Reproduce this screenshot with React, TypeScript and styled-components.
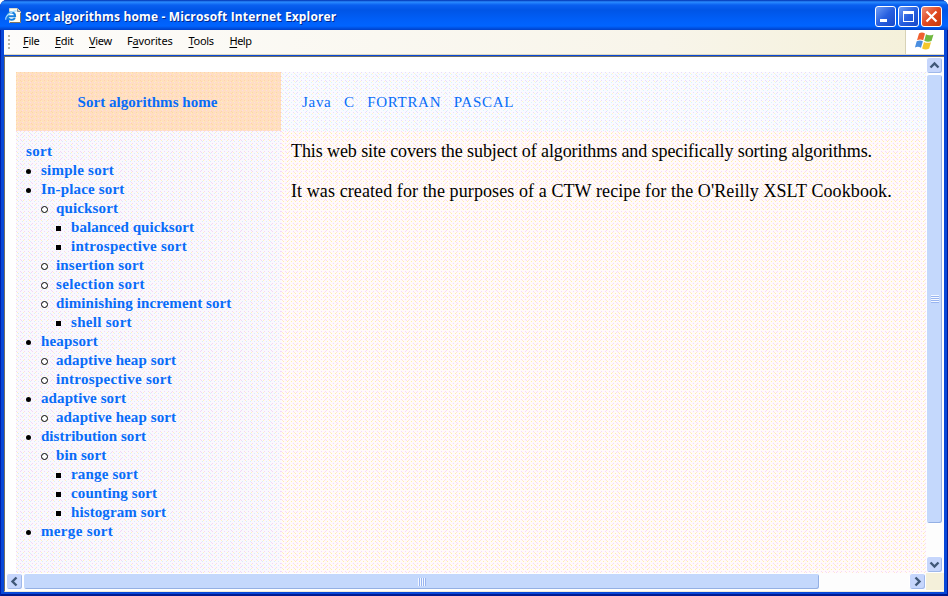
import React from 'react';
import styled, { createGlobalStyle } from 'styled-components';

const Global = createGlobalStyle`
  *, *::before { box-sizing: border-box; }
  html, body { margin: 0; background: #fff; overflow: hidden; }
`;

const BrowserWindow = styled.div`
  width: 948px;
  height: 596px;
  display: flex;
  flex-direction: column;
  padding: 0 4px 4px;
  background: #0848d8;
  box-shadow: inset 1px 0 #0020a8, inset -1px 0 #001890, inset 0 -2px #001a90;
  border-radius: 7px 7px 0 0;
  overflow: hidden;
`;

const TitleBar = styled.header`
  height: 30px;
  flex: none;
  margin: 0 -4px;
  padding: 3px 6px 0 5px;
  display: flex;
  align-items: center;
  background: linear-gradient(#0030b0 0, #2a8cff 2px, #0a60f0 5px, #0055e6 10px, #0060fa 21px, #0064ff 26px, #0040c8 30px);
`;

const Title = styled.h1`
  margin: 0 auto 0 3px;
  padding-top: 1px;
  font: bold 12px/18px "Open Sans", "Noto Sans", sans-serif;
  letter-spacing: 0.15px;
  white-space: nowrap;
  color: #fff;
  text-shadow: 1px 1px #002a90;
`;

const WindowButton = styled.button<{ $close?: boolean }>`
  width: 21px;
  height: 21px;
  margin-left: 2px;
  padding: 0;
  border: 1px solid #fff;
  border-radius: 3px;
  background: ${p => (p.$close ? 'linear-gradient(135deg,#f09078,#e04820 50%,#c83808)' : 'linear-gradient(135deg,#6f9df5,#2860e0 50%,#1848c8)')};
  svg { display: block; }
`;

const MenuBar = styled.nav`
  height: 25px;
  flex: none;
  display: flex;
  align-items: center;
  padding-left: 4px;
  margin-bottom: 1px;
  background: linear-gradient(90deg, #fdfcfa, #f8f5ea 70%, #f4f0d8);
  border-bottom: 1px solid #dcd7bd;
`;

const Grip = styled.i`
  width: 2px;
  height: 15px;
  margin-right: 13px;
  background: repeating-linear-gradient(#b9b6a6 0 2px, transparent 2px 4px);
`;

const MenuItem = styled.span<{ $w: number; $ls: number }>`
  width: ${p => p.$w}px;
  flex: none;
  padding-bottom: 2px;
  font: 11px/14px "Noto Sans", sans-serif;
  letter-spacing: ${p => p.$ls}px;
  color: #000;
  white-space: nowrap;
  u { text-underline-offset: 2px; text-decoration-thickness: 1px; }
`;

const Throbber = styled.div`
  width: 39px;
  height: 24px;
  margin-left: auto;
  display: grid;
  place-items: center;
  padding-bottom: 2px;
  border-left: 1px solid #d8d2b6;
  background: #fff;
`;

const Client = styled.div`
  flex: 1;
  min-height: 0;
  display: grid;
  grid-template: 516px 17px / 920px 18px;
  padding-left: 1px;
  border-top: 1px solid #716f64;
  border-left: 1px solid #716f64;
  border-bottom: 1px solid #ece9d8;
  background: #fff;
`;

const Viewport = styled.main`
  padding: 15px 0 0 10px;
  display: grid;
  grid-template: 59px 1fr / 265px 1fr;
  font-family: "Liberation Serif", serif;
  background: #fff;
`;

const dot = (colour: string) => `conic-gradient(from 0deg at 1px 1px, transparent 75%, ${colour} 0)`;

const dither = (base: string, a: string, b: string, c: string) => `
  background-color: ${base};
  background-image: ${dot(a)}, ${dot(b)}, ${dot(c)}, ${dot(a)};
  background-size: 4px 4px, 4px 4px, 6px 4px, 10px 6px;
  background-position: 0 0, 2px 2px, 1px 1px, 5px 3px;
`;

const Banner = styled.div`
  display: flex;
  align-items: center;
  justify-content: center;
  padding: 1px 2px 0 0;
  ${dither('#ffdfc0', '#ffd4a8', '#ffd8e4', '#fff0b8')}
`;

const LanguageBar = styled.div`
  display: flex;
  align-items: center;
  gap: 12.5px;
  padding: 1px 0 0 21px;
  ${dither('#fafaff', '#e8dcfa', '#d8f6fa', '#fff6c8')}
`;

const Sidebar = styled.div`
  padding: 11px 0 0 10px;
  ${dither('#faf8fd', '#f2d6f6', '#d6eefa', '#fff0c0')}
`;

const Article = styled.article`
  padding: 10px 0 0 10px;
  ${dither('#fffafa', '#f8d8f8', '#fff0a8', '#ffe8d0')}
`;

const Link = styled.a<{ $ls?: number; $plain?: boolean }>`
  font-size: 15px;
  line-height: 19px;
  font-weight: ${p => (p.$plain ? 'normal' : 'bold')};
  letter-spacing: ${p => p.$ls ?? 0}px;
  white-space: nowrap;
  color: #086cf8;
`;

const TreeRow = styled.div<{ $depth: number }>`
  height: 19px;
  display: flex;
  align-items: center;
  padding-left: ${p => (p.$depth ? (p.$depth - 1) * 15 : 0)}px;
`;

const Bullet = styled.span<{ $depth: number }>`
  width: 15px;
  flex: none;
  display: flex;
  padding-top: 2px;
  &::before {
    content: '';
    width: ${p => (p.$depth === 2 ? 7 : 5)}px;
    height: ${p => (p.$depth === 2 ? 7 : 5)}px;
    border: ${p => (p.$depth === 2 ? '1px solid #000' : '0')};
    border-radius: ${p => (p.$depth === 3 ? 0 : '50%')};
    background: ${p => (p.$depth === 2 ? '#fff' : '#000')};
  }
`;

const Paragraph = styled.p<{ $ls: number }>`
  margin: 0 0 19px;
  font-size: 18px;
  line-height: 21px;
  letter-spacing: ${p => p.$ls}px;
  white-space: nowrap;
  color: #000;
`;

const ScrollBar = styled.div<{ $horizontal?: boolean }>`
  display: flex;
  flex-direction: ${p => (p.$horizontal ? 'row' : 'column')};
  background: #fdfdfd;
`;

const ScrollArrow = styled.button`
  width: 17px;
  height: 17px;
  flex: none;
  padding: 0;
  border: 1px solid #fff;
  border-radius: 3px;
  background: #c6d6fc;
  box-shadow: inset -1px -1px #9fb8ea;
  svg { display: block; }
`;

const Thumb = styled.div<{ $horizontal?: boolean; $length: number }>`
  ${p => (p.$horizontal ? 'width' : 'height')}: ${p => p.$length}px;
  ${p => (p.$horizontal ? 'height' : 'width')}: 17px;
  flex: none;
  display: grid;
  place-items: center;
  border: 1px solid #fff;
  border-radius: 3px;
  background: #c4d8fc;
  box-shadow: inset -1px -1px #94b0e4;
  &::before {
    content: '';
    width: 8px;
    height: 8px;
    background: repeating-linear-gradient(${p => (p.$horizontal ? '90deg' : '180deg')}, #f4f8ff 0 1px, #98b4f0 1px 2px);
  }
`;

const Track = styled.div`
  flex: 1;
`;

const Corner = styled.div`
  background: #f4f0da;
`;

const arrowPaths = {
  up: 'M3.5 9.5 7.5 5.5 11.5 9.5',
  down: 'M3.5 5.5 7.5 9.5 11.5 5.5',
  left: 'M9.5 3.5 5.5 7.5 9.5 11.5',
  right: 'M5.5 3.5 9.5 7.5 5.5 11.5',
};

const Arrow = ({ dir }: { dir: keyof typeof arrowPaths }) => (
  <ScrollArrow aria-label={dir}>
    <svg width="15" height="15"><path d={arrowPaths[dir]} fill="none" stroke="#405878" strokeWidth="2.4" /></svg>
  </ScrollArrow>
);

const PageIcon = () => (
  <svg width="17" height="17" viewBox="0 0 17 17">
    <path d="M4.5 .5h8l3 3v11h-11z" fill="#fffdf0" stroke="#d9d7ca" />
    <path d="M12.5 .5v3h3" fill="#c8c5b4" stroke="#7d8899" />
    <path d="M5 14.5h10.5V5" fill="none" stroke="#7b7362" />
    <path d="M2.5 8.2h7.6c-.1-5-7.4-4.6-7.6-.2-.2 4.2 5.7 4.8 7.4 2" fill="#fff" stroke="#1681df" strokeWidth="2" />
    <path d="M1 11.8C-.5 8 8.2 1.7 11.6 3.1" fill="none" stroke="#a8dcfc" strokeWidth="1.2" />
  </svg>
);

const WindowsLogo = () => (
  <svg width="20" height="18" viewBox="0 0 20 18">
    <path d="M4 1.5Q7-.3 10 1.6L8.2 8.2Q5.3 6.6 2 8.2z" fill="#f06030" />
    <path d="M11 2.2Q14 4.2 18.5 2.4L16.5 9Q12.8 10.6 9.3 8.8z" fill="#70b840" />
    <path d="M1.7 9.3Q5 7.6 7.9 9.3L6 15.8Q3 14-.1 15.5z" fill="#4a8ee0" />
    <path d="M9 10Q12.3 11.6 16 10.2L14.2 16.5Q10.5 18.4 7.1 16.4z" fill="#f5c72c" />
  </svg>
);

const menus: [string, number, number, number][] = [
  ['File', 0, 32, -0.3], ['Edit', 0, 34, -0.3], ['View', 0, 38, -0.3],
  ['Favorites', 1, 61.5, -0.15], ['Tools', 0, 41, -0.3], ['Help', 0, 30, -0.5],
];

const languages: [string, number][] = [['Java', 0.7], ['C', 0.7], ['FORTRAN', 0.7], ['PASCAL', 0.7]];

const tree: [number, string, number][] = [
  [0, 'sort', 0.3], [1, 'simple sort', 0.24], [1, 'In-place sort', 0.17], [2, 'quicksort', 0.14],
  [3, 'balanced quicksort', 0.05], [3, 'introspective sort', 0.28], [2, 'insertion sort', 0.18],
  [2, 'selection sort', 0.36], [2, 'diminishing increment sort', 0.09], [3, 'shell sort', 0.3],
  [1, 'heapsort', 0.14], [2, 'adaptive heap sort', 0.1], [2, 'introspective sort', 0.28],
  [1, 'adaptive sort', 0.1], [2, 'adaptive heap sort', 0.1], [1, 'distribution sort', 0.03],
  [2, 'bin sort', 0.08], [3, 'range sort', 0.17], [3, 'counting sort', 0.12], [3, 'histogram sort', 0.1],
  [1, 'merge sort', 0.34],
];

export default function App() {
  return (
    <BrowserWindow>
      <Global />
      <TitleBar>
        <PageIcon />
        <Title>Sort algorithms home - Microsoft Internet Explorer</Title>
        <WindowButton aria-label="Minimize"><svg width="19" height="19"><path d="M4 12h7v3H4z" fill="#fff" /></svg></WindowButton>
        <WindowButton aria-label="Maximize"><svg width="19" height="19"><path d="M4 4h11v11H4zm1 3v7h9V7z" fill="#fff" fillRule="evenodd" /></svg></WindowButton>
        <WindowButton $close aria-label="Close"><svg width="19" height="19"><path d="M4.5 4.5l10 10m0-10l-10 10" stroke="#fff" strokeWidth="2.2" /></svg></WindowButton>
      </TitleBar>
      <MenuBar>
        <Grip />
        {menus.map(([label, at, w, ls]) => (
          <MenuItem key={label} $w={w} $ls={ls}>{label.slice(0, at)}<u>{label[at]}</u>{label.slice(at + 1)}</MenuItem>
        ))}
        <Throbber><WindowsLogo /></Throbber>
      </MenuBar>
      <Client>
        <Viewport>
          <Banner><Link $ls={0.04}>Sort algorithms home</Link></Banner>
          <LanguageBar>
            {languages.map(([name, ls]) => <Link key={name} $plain $ls={ls}>{name}</Link>)}
          </LanguageBar>
          <Sidebar>
            {tree.map(([depth, label, ls], i) => (
              <TreeRow key={i} $depth={depth}>
                {depth > 0 && <Bullet $depth={depth} />}
                <Link $ls={ls}>{label}</Link>
              </TreeRow>
            ))}
          </Sidebar>
          <Article>
            <Paragraph $ls={-0.095}>This web site covers the subject of algorithms and specifically sorting algorithms.</Paragraph>
            <Paragraph $ls={0.095}>It was created for the purposes of a CTW recipe for the O'Reilly XSLT Cookbook.</Paragraph>
          </Article>
        </Viewport>
        <ScrollBar>
          <Arrow dir="up" />
          <Thumb $length={450} />
          <Track />
          <Arrow dir="down" />
        </ScrollBar>
        <ScrollBar $horizontal>
          <Arrow dir="left" />
          <Thumb $horizontal $length={797} />
          <Track />
          <Arrow dir="right" />
        </ScrollBar>
        <Corner />
      </Client>
    </BrowserWindow>
  );
}
